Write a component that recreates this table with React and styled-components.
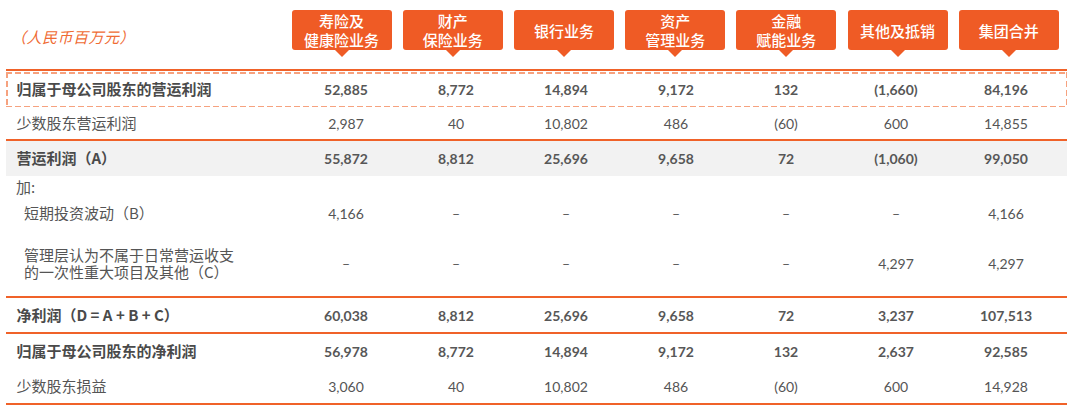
import React from "react";
import styled, { createGlobalStyle } from "styled-components";

const ORANGE = "#EF5B25";
const RULE = "#F06229";
const DASH = "#F6A27F";
const TEXT = "#555555";

const GlobalStyle = createGlobalStyle`
  html, body { margin: 0; padding: 0; background: #ffffff; }
  body { font-family: "Noto Sans CJK SC", "Noto Sans", sans-serif; color: ${TEXT}; }
`;

const Page = styled.div`
  width: 1080px;
  height: 418px;
  overflow: hidden;
`;

const Header = styled.div`
  display: grid;
  grid-template-columns: 286px repeat(7, 111.2px);
  height: 59px;
  padding-top: 10px;
  box-sizing: border-box;
  margin-bottom: 10px;
`;

const Caption = styled.div`
  padding: 18px 0 0 11px;
  font-size: 15px;
  line-height: 18px;
  font-style: italic;
  letter-spacing: 0.5px;
  color: #EF6B33;
  white-space: nowrap;
`;

const HeadBox = styled.div`
  position: relative;
  justify-self: center;
  width: 100px;
  height: 40px;
  background: ${ORANGE};
  border-radius: 3px;
  color: #ffffff;
  font-size: 15px;
  line-height: 19px;
  font-weight: 500;
  display: flex;
  align-items: center;
  justify-content: center;
  text-align: center;
  &::after {
    content: "";
    position: absolute;
    left: 50%;
    top: 100%;
    margin-left: -7px;
    border-left: 7px solid transparent;
    border-right: 7px solid transparent;
    border-top: 7px solid ${ORANGE};
  }
`;

const Table = styled.div`
  margin-left: 6px;
  width: 1061px;
`;

const Rule = styled.div`
  height: 2px;
  background: ${RULE};
`;

const dashed = `
  background:
    linear-gradient(90deg, ${DASH} 62%, transparent 0) top left / 9px 1.5px repeat-x,
    linear-gradient(90deg, ${DASH} 62%, transparent 0) bottom left / 9px 1.5px repeat-x,
    linear-gradient(180deg, ${DASH} 62%, transparent 0) top left / 1.5px 9px repeat-y,
    linear-gradient(180deg, ${DASH} 62%, transparent 0) top right / 1.5px 9px repeat-y;
`;

const Row = styled.div`
  display: grid;
  grid-template-columns: 285px repeat(7, 110px);
  align-items: center;
  height: ${(p) => p.$h}px;
  box-sizing: border-box;
  margin-top: ${(p) => p.$mt || 0}px;
  padding-top: ${(p) => p.$pt || 0}px;
  background: ${(p) => (p.$shade ? "#F2F2F2" : "transparent")};
  ${(p) => (p.$dashed ? dashed : "")}
`;

const Label = styled.div`
  padding-left: ${(p) => p.$indent}px;
  font-size: 15px;
  line-height: 16.5px;
  font-weight: ${(p) => (p.$bold ? 700 : 400)};
  color: ${(p) => (p.$bold ? "#4a4a4a" : TEXT)};
  white-space: nowrap;
`;

const Value = styled.div`
  text-align: center;
  font-family: Lato, "Noto Sans", sans-serif;
  font-size: 14px;
  font-weight: ${(p) => (p.$bold ? 700 : 400)};
  color: ${(p) => (p.$bold ? "#575757" : TEXT)};
`;

const heads = [
  ["寿险及", "健康险业务"],
  ["财产", "保险业务"],
  ["银行业务"],
  ["资产", "管理业务"],
  ["金融", "赋能业务"],
  ["其他及抵销"],
  ["集团合并"],
];

const D = "–";

const rows = [
  { rule: true },
  { label: "归属于母公司股东的营运利润", bold: true, h: 35, dashed: true, mt: 1,
    v: ["52,885", "8,772", "14,894", "9,172", "132", "(1,660)", "84,196"] },
  { label: "少数股东营运利润", h: 32,
    v: ["2,987", "40", "10,802", "486", "(60)", "600", "14,855"] },
  { rule: true },
  { label: "营运利润（A）", bold: true, h: 35, shade: true,
    v: ["55,872", "8,812", "25,696", "9,658", "72", "(1,060)", "99,050"] },
  { label: "加:", h: 22, indent: 10 },
  { label: "短期投资波动（B）", h: 30, indent: 18,
    v: ["4,166", D, D, D, D, D, "4,166"] },
  { label: ["管理层认为不属于日常营运收支", "的一次性重大项目及其他（C）"], h: 68, indent: 18, pt: 3,
    v: [D, D, D, D, D, "4,297", "4,297"] },
  { rule: true },
  { label: "净利润（D = A + B + C）", bold: true, h: 34,
    v: ["60,038", "8,812", "25,696", "9,658", "72", "3,237", "107,513"] },
  { rule: true },
  { label: "归属于母公司股东的净利润", bold: true, h: 35,
    v: ["56,978", "8,772", "14,894", "9,172", "132", "2,637", "92,585"] },
  { label: "少数股东损益", h: 34,
    v: ["3,060", "40", "10,802", "486", "(60)", "600", "14,928"] },
  { rule: true },
];

export default function App() {
  return (
    <Page>
      <GlobalStyle />
      <Header>
        <Caption>（人民币百万元）</Caption>
        {heads.map((lines, i) => (
          <HeadBox key={i}>
            <div>
              {lines.map((l, j) => (
                <div key={j}>{l}</div>
              ))}
            </div>
          </HeadBox>
        ))}
      </Header>
      <Table>
        {rows.map((r, i) =>
          r.rule ? (
            <Rule key={i} />
          ) : (
            <Row key={i} $h={r.h} $shade={r.shade} $dashed={r.dashed} $pt={r.pt} $mt={r.mt}>
              <Label $bold={r.bold} $indent={r.indent ?? 10.5}>
                {Array.isArray(r.label) ? (
                  <>
                    {r.label[0]}
                    <br />
                    {r.label[1]}
                  </>
                ) : (
                  r.label
                )}
              </Label>
              {(r.v || []).map((v, j) => (
                <Value key={j} $bold={r.bold}>
                  {v}
                </Value>
              ))}
            </Row>
          )
        )}
      </Table>
    </Page>
  );
}
